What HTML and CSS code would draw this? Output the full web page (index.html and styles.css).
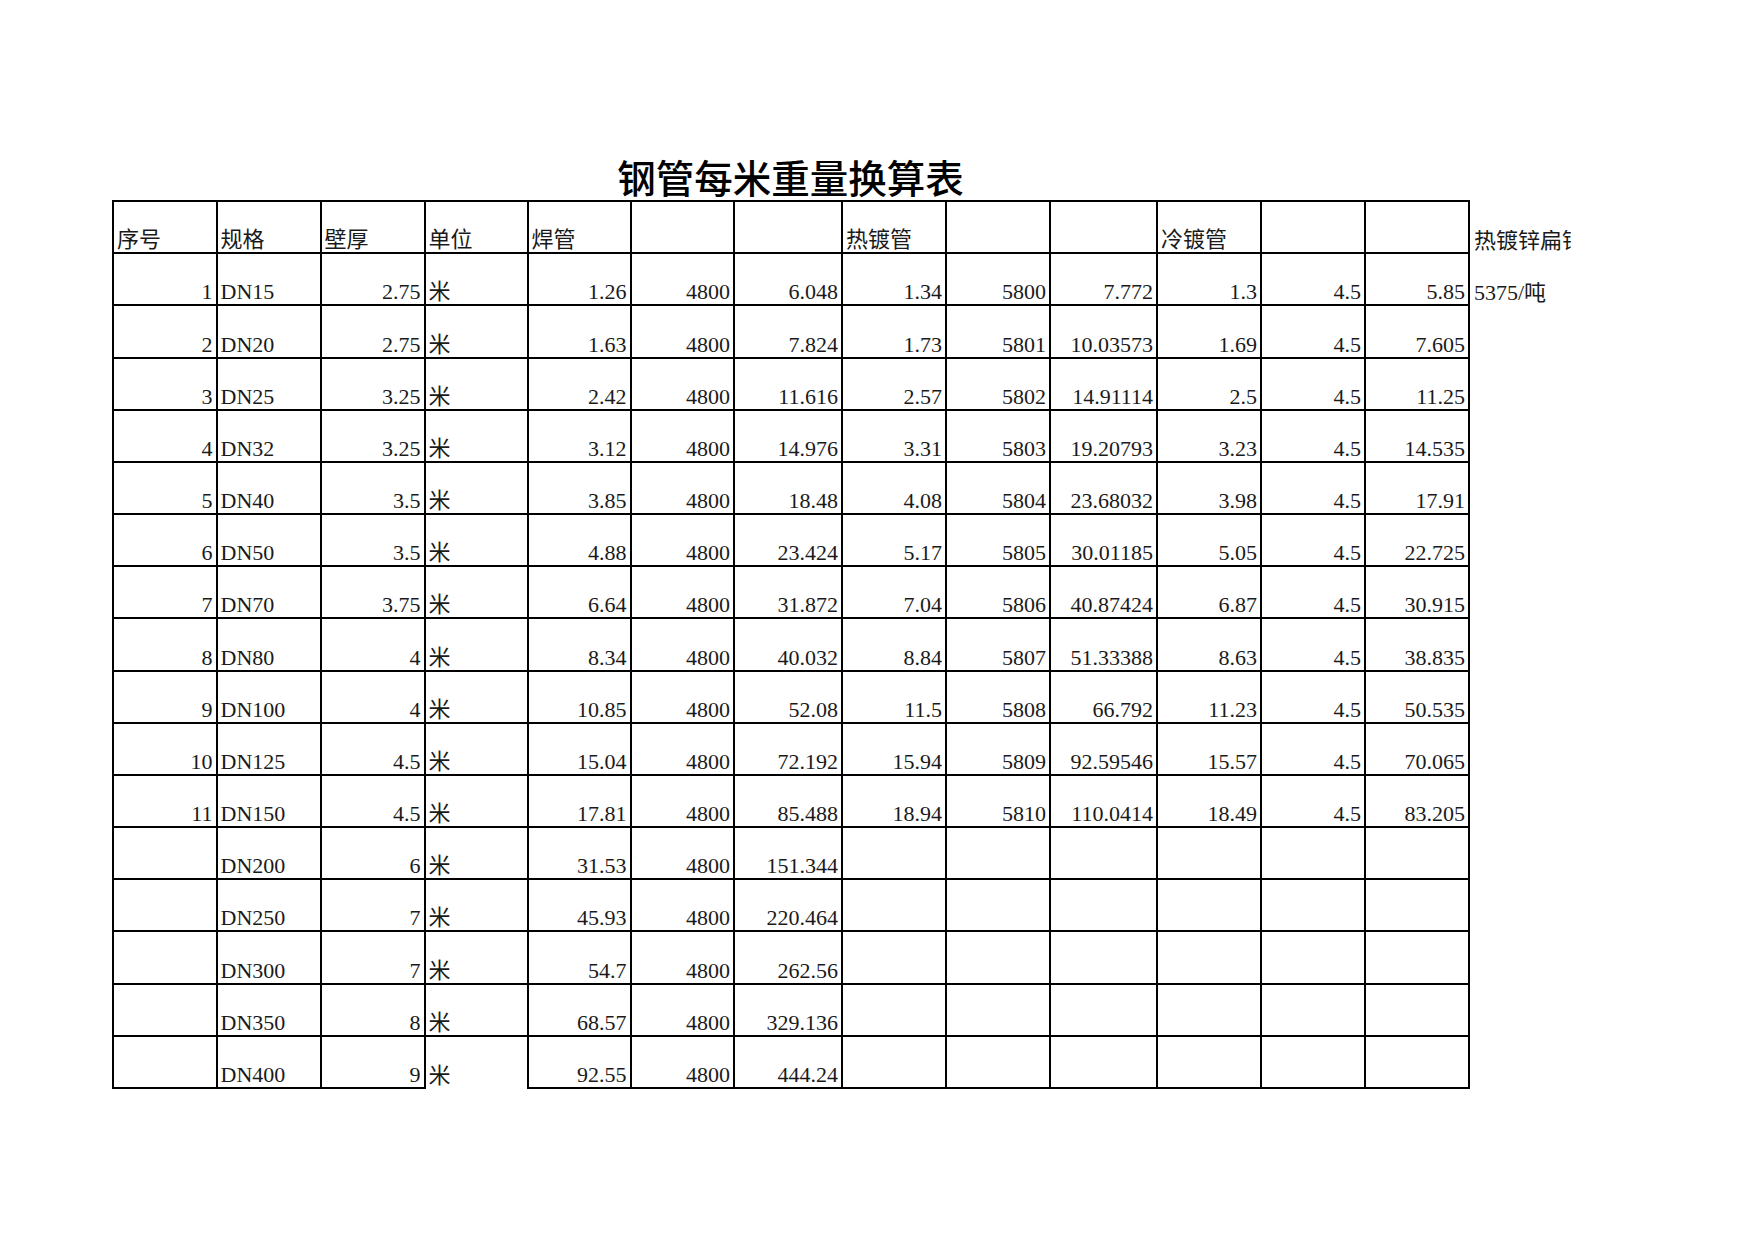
FILE: index.html
```html
<!DOCTYPE html>
<html lang="zh-CN">
<head>
<meta charset="utf-8">
<title>钢管每米重量换算表</title>
<link rel="stylesheet" href="styles.css">
</head>
<body>
<div class="sheet">
  <div class="title">钢管每米重量换算表</div>
  <table class="grid">
    <colgroup>
      <col class="c1"><col class="c2"><col class="c3"><col class="c4"><col class="c5"><col class="c6"><col class="c7"><col class="c8"><col class="c9"><col class="c10"><col class="c11"><col class="c12"><col class="c13"><col class="c14">
    </colgroup>
    <tbody>
      <tr><td>序号</td><td>规格</td><td>壁厚</td><td>单位</td><td>焊管</td><td></td><td></td><td>热镀管</td><td></td><td></td><td>冷镀管</td><td></td><td></td><td class="out"><div class="clip">热镀锌扁钢</div></td></tr>
      <tr><td class="r">1</td><td>DN15</td><td class="r">2.75</td><td>米</td><td class="r">1.26</td><td class="r">4800</td><td class="r">6.048</td><td class="r">1.34</td><td class="r">5800</td><td class="r">7.772</td><td class="r">1.3</td><td class="r">4.5</td><td class="r">5.85</td><td class="out"><div class="clip">5375/吨</div></td></tr>
      <tr><td class="r">2</td><td>DN20</td><td class="r">2.75</td><td>米</td><td class="r">1.63</td><td class="r">4800</td><td class="r">7.824</td><td class="r">1.73</td><td class="r">5801</td><td class="r">10.03573</td><td class="r">1.69</td><td class="r">4.5</td><td class="r">7.605</td><td class="out"></td></tr>
      <tr><td class="r">3</td><td>DN25</td><td class="r">3.25</td><td>米</td><td class="r">2.42</td><td class="r">4800</td><td class="r">11.616</td><td class="r">2.57</td><td class="r">5802</td><td class="r">14.91114</td><td class="r">2.5</td><td class="r">4.5</td><td class="r">11.25</td><td class="out"></td></tr>
      <tr><td class="r">4</td><td>DN32</td><td class="r">3.25</td><td>米</td><td class="r">3.12</td><td class="r">4800</td><td class="r">14.976</td><td class="r">3.31</td><td class="r">5803</td><td class="r">19.20793</td><td class="r">3.23</td><td class="r">4.5</td><td class="r">14.535</td><td class="out"></td></tr>
      <tr><td class="r">5</td><td>DN40</td><td class="r">3.5</td><td>米</td><td class="r">3.85</td><td class="r">4800</td><td class="r">18.48</td><td class="r">4.08</td><td class="r">5804</td><td class="r">23.68032</td><td class="r">3.98</td><td class="r">4.5</td><td class="r">17.91</td><td class="out"></td></tr>
      <tr><td class="r">6</td><td>DN50</td><td class="r">3.5</td><td>米</td><td class="r">4.88</td><td class="r">4800</td><td class="r">23.424</td><td class="r">5.17</td><td class="r">5805</td><td class="r">30.01185</td><td class="r">5.05</td><td class="r">4.5</td><td class="r">22.725</td><td class="out"></td></tr>
      <tr><td class="r">7</td><td>DN70</td><td class="r">3.75</td><td>米</td><td class="r">6.64</td><td class="r">4800</td><td class="r">31.872</td><td class="r">7.04</td><td class="r">5806</td><td class="r">40.87424</td><td class="r">6.87</td><td class="r">4.5</td><td class="r">30.915</td><td class="out"></td></tr>
      <tr><td class="r">8</td><td>DN80</td><td class="r">4</td><td>米</td><td class="r">8.34</td><td class="r">4800</td><td class="r">40.032</td><td class="r">8.84</td><td class="r">5807</td><td class="r">51.33388</td><td class="r">8.63</td><td class="r">4.5</td><td class="r">38.835</td><td class="out"></td></tr>
      <tr><td class="r">9</td><td>DN100</td><td class="r">4</td><td>米</td><td class="r">10.85</td><td class="r">4800</td><td class="r">52.08</td><td class="r">11.5</td><td class="r">5808</td><td class="r">66.792</td><td class="r">11.23</td><td class="r">4.5</td><td class="r">50.535</td><td class="out"></td></tr>
      <tr><td class="r">10</td><td>DN125</td><td class="r">4.5</td><td>米</td><td class="r">15.04</td><td class="r">4800</td><td class="r">72.192</td><td class="r">15.94</td><td class="r">5809</td><td class="r">92.59546</td><td class="r">15.57</td><td class="r">4.5</td><td class="r">70.065</td><td class="out"></td></tr>
      <tr><td class="r">11</td><td>DN150</td><td class="r">4.5</td><td>米</td><td class="r">17.81</td><td class="r">4800</td><td class="r">85.488</td><td class="r">18.94</td><td class="r">5810</td><td class="r">110.0414</td><td class="r">18.49</td><td class="r">4.5</td><td class="r">83.205</td><td class="out"></td></tr>
      <tr><td></td><td>DN200</td><td class="r">6</td><td>米</td><td class="r">31.53</td><td class="r">4800</td><td class="r">151.344</td><td></td><td></td><td></td><td></td><td></td><td></td><td class="out"></td></tr>
      <tr><td></td><td>DN250</td><td class="r">7</td><td>米</td><td class="r">45.93</td><td class="r">4800</td><td class="r">220.464</td><td></td><td></td><td></td><td></td><td></td><td></td><td class="out"></td></tr>
      <tr><td></td><td>DN300</td><td class="r">7</td><td>米</td><td class="r">54.7</td><td class="r">4800</td><td class="r">262.56</td><td></td><td></td><td></td><td></td><td></td><td></td><td class="out"></td></tr>
      <tr><td></td><td>DN350</td><td class="r">8</td><td>米</td><td class="r">68.57</td><td class="r">4800</td><td class="r">329.136</td><td></td><td></td><td></td><td></td><td></td><td></td><td class="out"></td></tr>
      <tr class="last"><td></td><td>DN400</td><td class="r">9</td><td class="open">米</td><td class="r">92.55</td><td class="r">4800</td><td class="r">444.24</td><td></td><td></td><td></td><td></td><td></td><td></td><td class="out"></td></tr>
    </tbody>
  </table>
</div>
</body>
</html>
```

FILE: styles.css
```css
html, body {
  margin: 0;
  padding: 0;
  background: #ffffff;
}

.sheet {
  padding: 153px 0 0 112px;
  color: #111111;
}

.title {
  width: 1357px;
  text-align: center;
  font-family: "Noto Sans CJK SC", sans-serif;
  font-weight: 500;
  font-size: 38.5px;
  line-height: 47px;
  height: 47px;
  color: #000000;
}

.grid {
  border-collapse: collapse;
  table-layout: fixed;
  width: 1462px;
  font-family: "Liberation Serif", "Noto Sans CJK SC", serif;
  font-size: 22px;
  line-height: 22px;
  color: #1a1a1a;
}

.c1 { width: 103.5px; }
.c2 { width: 104px; }
.c3 { width: 104px; }
.c4 { width: 103px; }
.c5 { width: 103px; }
.c6 { width: 103.5px; }
.c7 { width: 108px; }
.c8 { width: 104px; }
.c9 { width: 104px; }
.c10 { width: 107px; }
.c11 { width: 104px; }
.c12 { width: 104px; }
.c13 { width: 104px; }
.c14 { width: 105.5px; }

.grid td {
  height: 52.18px;
  box-sizing: border-box;
  border: 2px solid #000000;
  padding: 0 3px 1px 3px;
  vertical-align: bottom;
  text-align: left;
  white-space: nowrap;
  overflow: hidden;
}

.grid td.r {
  text-align: right;
  padding-right: 3px;
}

.grid td.out {
  border: none;
  padding-left: 4px;
}

.grid tr.last td.open {
  border-bottom: none;
}

.clip {
  width: 100%;
  overflow: hidden;
  white-space: nowrap;
}
```
